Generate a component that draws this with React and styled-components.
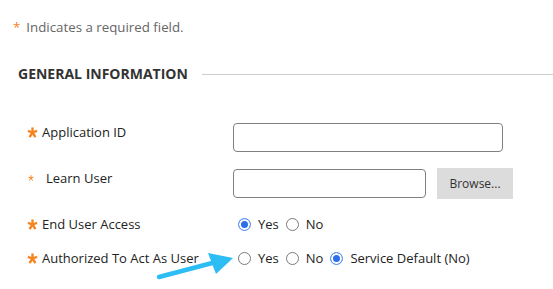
import React from 'react';
import styled, { createGlobalStyle } from 'styled-components';

const colors = {
  orange: '#f5831f',
  text: '#222',
  muted: '#666',
  line: '#cdcdcd',
  border: '#808080',
  blue: '#2d6ee9',
  arrow: '#2bbdf3',
};

const GlobalStyle = createGlobalStyle`
  html, body {
    margin: 0;
    background: #fff;
  }
  body {
    font-family: 'Open Sans', 'Noto Sans', sans-serif;
    font-size: 13px;
    color: ${colors.text};
  }
`;

const Page = styled.div`
  position: relative;
  width: 553px;
  height: 289px;
  overflow: hidden;
  padding-top: 18px;
  box-sizing: border-box;
`;

const Note = styled.div`
  display: flex;
  align-items: center;
  padding-left: 13px;
  line-height: 18px;
  font-size: 13.3px;
  color: ${colors.muted};
  span {
    color: ${colors.orange};
    margin-right: 6px;
  }
`;

const Heading = styled.div`
  display: flex;
  align-items: center;
  margin-top: 29px;
  padding-left: 18px;
  h2 {
    margin: 0;
    font-size: 14px;
    font-weight: 700;
    line-height: 18px;
    color: #333;
    text-transform: uppercase;
  }
  &::after {
    content: '';
    flex: 1;
    height: 1px;
    margin-left: 14px;
    background: ${colors.line};
  }
`;

const Form = styled.div`
  display: grid;
  grid-template-columns: 206px auto;
  align-items: start;
  row-gap: 16px;
  margin-top: 40px;
  padding-left: 27px;
`;

const Label = styled.div`
  display: flex;
  align-items: center;
  line-height: 18px;
  margin-top: ${(p) => p.$offset || 0}px;
`;

const Star = styled.span`
  display: inline-flex;
  justify-content: center;
  width: ${(p) => (p.$small ? 7 : 11)}px;
  margin-right: ${(p) => (p.$small ? 12 : 4)}px;
  color: ${colors.orange};
  svg {
    display: block;
  }
`;

const Control = styled.div`
  display: flex;
  align-items: center;
  gap: 11px;
`;

const TextInput = styled.input`
  width: ${(p) => p.$width}px;
  height: 29px;
  box-sizing: border-box;
  border: 1px solid ${colors.border};
  border-radius: 4px;
  padding: 0 6px;
  font: inherit;
  outline: none;
`;

const Browse = styled.button`
  width: 76px;
  height: 31px;
  border: none;
  border-radius: 0;
  background: #dcdcdc;
  color: #333;
  font-family: inherit;
  font-size: 12px;
  padding: 0;
`;

const Options = styled.div`
  display: flex;
  align-items: center;
  gap: 2px;
  line-height: 18px;
`;

const Option = styled.label`
  display: inline-flex;
  align-items: center;
`;

const Radio = styled.span`
  display: inline-block;
  width: 13px;
  height: 13px;
  box-sizing: border-box;
  border-radius: 50%;
  margin: 1px 7px 0 5px;
  border: 1px solid ${(p) => (p.$checked ? '#5d94f3' : '#7a7a7a')};
  background: ${(p) => (p.$checked ? colors.blue : '#fff')};
  box-shadow: ${(p) => (p.$checked ? 'inset 0 0 0 2px #fff' : 'none')};
`;

const Arrow = styled.svg`
  position: absolute;
  left: 150px;
  top: 246px;
`;

function Asterisk({ small }) {
  const s = small ? 6 : 11;
  return (
    <Star $small={small}>
      <svg width={s} height={s} viewBox="0 0 12 12">
        <g stroke={colors.orange} strokeWidth={small ? 2 : 2.6} strokeLinecap="butt">
          <line x1="6" y1="0.5" x2="6" y2="6" />
          <line x1="6" y1="6" x2="1" y2="4.2" />
          <line x1="6" y1="6" x2="11" y2="4.2" />
          <line x1="6" y1="6" x2="2.8" y2="11" />
          <line x1="6" y1="6" x2="9.2" y2="11" />
        </g>
      </svg>
    </Star>
  );
}

function RadioOption({ label, checked }) {
  return (
    <Option>
      <Radio $checked={checked} />
      {label}
    </Option>
  );
}

export default function App() {
  return (
    <Page>
      <GlobalStyle />
      <Note>
        <span>*</span>Indicates a required field.
      </Note>
      <Heading>
        <h2>General Information</h2>
      </Heading>
      <Form>
        <Label>
          <Asterisk />
          Application ID
        </Label>
        <Control>
          <TextInput $width={270} />
        </Control>

        <Label $offset={1}>
          <Asterisk small />
          Learn User
        </Label>
        <Control>
          <TextInput $width={193} />
          <Browse>Browse...</Browse>
        </Control>

        <Label>
          <Asterisk />
          End User Access
        </Label>
        <Options>
          <RadioOption label="Yes" checked />
          <RadioOption label="No" />
        </Options>

        <Label>
          <Asterisk />
          Authorized To Act As User
        </Label>
        <Options>
          <RadioOption label="Yes" />
          <RadioOption label="No" />
          <RadioOption label="Service Default (No)" checked />
        </Options>
      </Form>
      <Arrow width="90" height="40" viewBox="0 0 90 40">
        <line x1="9" y1="31" x2="66" y2="16" stroke={colors.arrow} strokeWidth="4.5" strokeLinecap="round" />
        <polygon points="83,12 58,7 66,28" fill={colors.arrow} />
      </Arrow>
    </Page>
  );
}
